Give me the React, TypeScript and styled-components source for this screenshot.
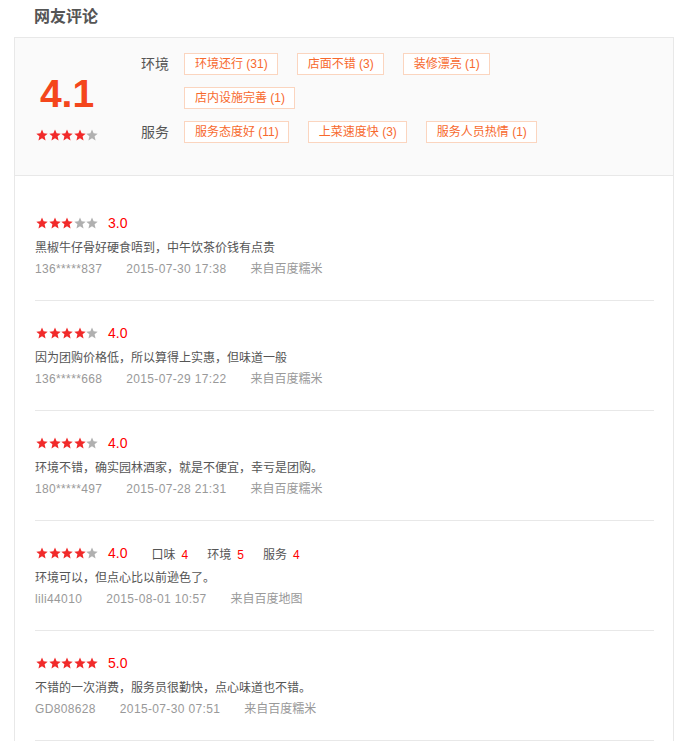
import styled, { createGlobalStyle } from 'styled-components'

interface Review {
  score: number;
  text: string;
  user: string;
  time: string;
  source: string;
  details?: { name: string; value: number }[];
}

const tagGroups = [
  { label: '环境', tags: ['环境还行 (31)', '店面不错 (3)', '装修漂亮 (1)', '店内设施完善 (1)'] },
  { label: '服务', tags: ['服务态度好 (11)', '上菜速度快 (3)', '服务人员热情 (1)'] },
]

const reviews: Review[] = [
  { score: 3, text: '黑椒牛仔骨好硬食唔到，中午饮茶价钱有点贵', user: '136*****837', time: '2015-07-30 17:38', source: '来自百度糯米' },
  { score: 4, text: '因为团购价格低，所以算得上实惠，但味道一般', user: '136*****668', time: '2015-07-29 17:22', source: '来自百度糯米' },
  { score: 4, text: '环境不错，确实园林酒家，就是不便宜，幸亏是团购。', user: '180*****497', time: '2015-07-28 21:31', source: '来自百度糯米' },
  {
    score: 4,
    text: '环境可以，但点心比以前逊色了。',
    user: 'lili44010',
    time: '2015-08-01 10:57',
    source: '来自百度地图',
    details: [
      { name: '口味', value: 4 },
      { name: '环境', value: 5 },
      { name: '服务', value: 4 },
    ],
  },
  { score: 5, text: '不错的一次消费，服务员很勤快，点心味道也不错。', user: 'GD808628', time: '2015-07-30 07:51', source: '来自百度糯米' },
]

const Star = ({ on }: { on: boolean }) => (
  <svg width="12" height="12" viewBox="0 0 24 24">
    <polygon
      points="12,1 15.2,8.6 23.4,9.3 17.2,14.7 19.1,22.8 12,18.5 4.9,22.8 6.8,14.7 0.6,9.3 8.8,8.6"
      fill={on ? '#f12a2a' : '#b0b0b0'}
    />
  </svg>
)

const Stars = ({ value }: { value: number }) => (
  <StyledStars>
    {[1, 2, 3, 4, 5].map(i => <Star key={i} on={i <= value} />)}
  </StyledStars>
)

export default function App() {
  return (
    <>
      <GlobalStyle />
      <StyledPage>
        <StyledTitle>网友评论</StyledTitle>
        <StyledBox>
          <StyledSummary>
            <StyledScoreBlock>
              <StyledScore>4.1</StyledScore>
              <Stars value={4} />
            </StyledScoreBlock>
            <StyledGroups>
              {tagGroups.map(g => (
                <StyledGroup key={g.label}>
                  <StyledGroupLabel>{g.label}</StyledGroupLabel>
                  <StyledTags>
                    {g.tags.map(t => <StyledTag key={t}>{t}</StyledTag>)}
                  </StyledTags>
                </StyledGroup>
              ))}
            </StyledGroups>
          </StyledSummary>
          <StyledList>
            {reviews.map((r, i) => (
              <StyledItem key={i}>
                <StyledRatingRow>
                  <Stars value={r.score} />
                  <StyledRating>{r.score.toFixed(1)}</StyledRating>
                  {r.details && (
                    <StyledDetails>
                      {r.details.map(d => (
                        <span key={d.name}>
                          {d.name}<StyledDetailValue>{d.value}</StyledDetailValue>
                        </span>
                      ))}
                    </StyledDetails>
                  )}
                </StyledRatingRow>
                <StyledComment>{r.text}</StyledComment>
                <StyledMeta>
                  <StyledMetaItem $latin>{r.user}</StyledMetaItem>
                  <StyledMetaItem $latin>{r.time}</StyledMetaItem>
                  <StyledMetaItem>{r.source}</StyledMetaItem>
                </StyledMeta>
              </StyledItem>
            ))}
          </StyledList>
        </StyledBox>
      </StyledPage>
    </>
  )
}

const GlobalStyle = createGlobalStyle`
  body {
    margin: 0;
    background: #fff;
    font-family: "Liberation Sans", "Noto Sans CJK SC", sans-serif;
    color: #555;
  }
`

const StyledPage = styled.div`
  width: 688px;
  padding: 6px 0 0 14px;
  box-sizing: border-box;
`

const StyledTitle = styled.h2`
  margin: 0 0 0 20px;
  height: 31px;
  font-size: 16px;
  line-height: 22px;
  font-weight: bold;
  color: #555;
`

const StyledBox = styled.div`
  width: 660px;
  box-sizing: border-box;
  border: 1px solid #e8e8e8;
  border-bottom: none;
`

const StyledSummary = styled.div`
  display: flex;
  background: #fafafa;
  border-bottom: 1px solid #e8e8e8;
  padding: 15px 0 20px 20px;
`

const StyledScoreBlock = styled.div`
  width: 64px;
  display: flex;
  flex-direction: column;
  align-items: center;
  padding-top: 21px;
`

const StyledScore = styled.div`
  font-size: 39px;
  line-height: 40px;
  font-weight: bold;
  color: #f4461c;
  margin-bottom: 15px;
`

const StyledStars = styled.span`
  display: inline-flex;
  gap: 0.5px;
  svg {
    display: block;
  }
`

const StyledGroups = styled.div`
  margin-left: 42px;
  display: flex;
  flex-direction: column;
`

const StyledGroup = styled.div`
  display: flex;
  align-items: flex-start;
`

const StyledGroupLabel = styled.span`
  width: 43px;
  font-size: 14px;
  line-height: 22px;
  color: #555;
`

const StyledTags = styled.div`
  width: 400px;
  display: flex;
  flex-wrap: wrap;
  column-gap: 19px;
`

const StyledTag = styled.span`
  height: 22px;
  box-sizing: border-box;
  margin-bottom: 12px;
  padding: 0 9px 0 10px;
  border: 1px solid #fbd5bf;
  background: #fff;
  color: #f7692d;
  font-size: 12px;
  line-height: 20px;
  white-space: nowrap;
`

const StyledList = styled.div`
  padding: 15px 19px 0 20px;
`

const StyledItem = styled.div`
  padding: 21px 0 20px;
  border-bottom: 1px solid #e8e8e8;
`

const StyledRatingRow = styled.div`
  display: flex;
  align-items: center;
  height: 22px;
  padding-left: 1px;
`

const StyledRating = styled.span`
  margin-left: 10px;
  font-size: 14px;
  color: #f00;
`

const StyledDetails = styled.span`
  display: flex;
  gap: 19px;
  margin-left: 24px;
  font-size: 12px;
  color: #555;
`

const StyledDetailValue = styled.span`
  margin-left: 6px;
  color: #f00;
`

const StyledComment = styled.div`
  margin-top: 3px;
  font-size: 12px;
  line-height: 22px;
  color: #555;
`

const StyledMeta = styled.div`
  display: flex;
  gap: 24px;
  margin-top: -1px;
  font-size: 12px;
  line-height: 22px;
  color: #999;
`

const StyledMetaItem = styled.span<{ $latin?: boolean }>`
  letter-spacing: ${p => (p.$latin ? '0.35px' : '0')};
`
